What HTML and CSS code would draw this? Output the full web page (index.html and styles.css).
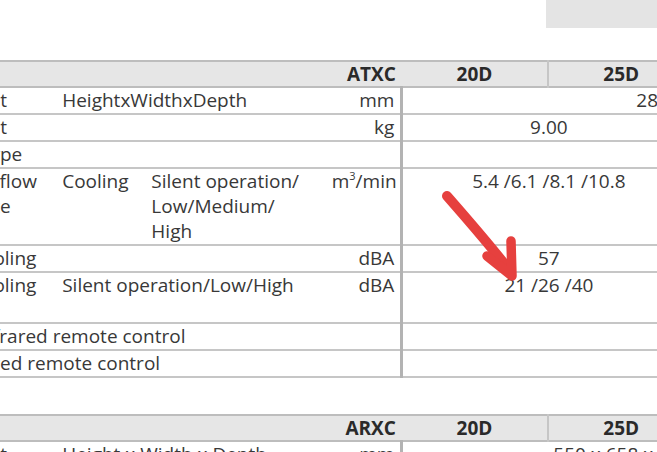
FILE: index.html
```html
<!DOCTYPE html>
<html lang="en">
<head>
<meta charset="utf-8">
<title>Specifications</title>
<link rel="stylesheet" href="styles.css">
</head>
<body>
<div class="page">
  <div class="top"><div class="greybox"></div></div>

  <table class="spec">
    <colgroup>
      <col class="c1"><col class="c2"><col class="c3"><col class="cu">
      <col class="cv"><col class="cv"><col class="cv"><col class="cv">
    </colgroup>
    <thead>
      <tr><th colspan="4" class="model">ATXC</th><th>20D</th><th class="sep">25D</th><th class="sep"></th><th class="sep"></th></tr>
    </thead>
    <tbody>
      <tr><td>Unit</td><td colspan="2">HeightxWidthxDepth</td><td class="unit">mm</td><td colspan="4" class="val">285x770x225</td></tr>
      <tr><td>Unit</td><td colspan="2"></td><td class="unit">kg</td><td colspan="2" class="val">9.00</td><td colspan="2"></td></tr>
      <tr><td class="shift">Type</td><td colspan="2"></td><td class="unit"></td><td colspan="2" class="val"></td><td colspan="2"></td></tr>
      <tr><td>Air flow<br><span class="rate">rate</span></td><td>Cooling</td><td>Silent operation/<br>Low/Medium/<br>High</td><td class="unit">m<sup>3</sup>/min</td><td colspan="2" class="val">5.4 /6.1 /8.1 /10.8</td><td colspan="2"></td></tr>
      <tr><td>Cooling</td><td colspan="2"></td><td class="unit">dBA</td><td colspan="2" class="val">57</td><td colspan="2"></td></tr>
      <tr class="two"><td>Cooling</td><td colspan="2">Silent operation/Low/High</td><td class="unit">dBA</td><td colspan="2" class="val">21 /26 /40</td><td colspan="2"></td></tr>
      <tr><td colspan="3" class="indent">Infrared remote control</td><td class="unit"></td><td colspan="2" class="val"></td><td colspan="2"></td></tr>
      <tr><td colspan="3">Wired remote control</td><td class="unit"></td><td colspan="2" class="val"></td><td colspan="2"></td></tr>
    </tbody>
  </table>

  <table class="spec second">
    <colgroup>
      <col class="c1"><col class="c2"><col class="c3"><col class="cu">
      <col class="cv"><col class="cv"><col class="cv"><col class="cv">
    </colgroup>
    <thead>
      <tr><th colspan="4" class="model">ARXC</th><th>20D</th><th class="sep">25D</th><th class="sep"></th><th class="sep"></th></tr>
    </thead>
    <tbody>
      <tr><td>Unit</td><td colspan="2">Height x Width x Depth</td><td class="unit">mm</td><td colspan="3" class="val">550 x 658 x 285</td><td></td></tr>
    </tbody>
  </table>

  <svg class="arrow" width="657" height="452" viewBox="0 0 657 452" aria-hidden="true">
    <path d="M447 196 C 468 220, 490 245, 510 271" fill="none" stroke="#e6403e" stroke-width="10" stroke-linecap="round"/>
    <path d="M487 256 L 512 276 L 511 241" fill="none" stroke="#e6403e" stroke-width="9.5" stroke-linecap="round" stroke-linejoin="round"/>
  </svg>
</div>
</body>
</html>
```

FILE: styles.css
```css
html, body {
  margin: 0;
  padding: 0;
  background: #ffffff;
}

.page {
  position: relative;
  width: 657px;
  height: 452px;
  overflow: hidden;
  font-family: "Open Sans", "Noto Sans", sans-serif;
  color: #383838;
}

.top {
  height: 60px;
  display: flex;
  justify-content: flex-end;
  align-items: flex-start;
}

.greybox {
  width: 111px;
  height: 28px;
  background: #e4e4e4;
}

.spec {
  border-collapse: collapse;
  table-layout: fixed;
  width: 1017px;
  margin-left: -30px;
  font-size: 19px;
  line-height: 25px;
}

.spec .c1 { width: 92px; }
.spec .c2 { width: 89px; }
.spec .c3 { width: 180px; }
.spec .cu { width: 70px; }
.spec .cv { width: 146px; }

.spec td,
.spec th {
  padding: 0;
  vertical-align: top;
  white-space: nowrap;
  overflow: hidden;
}

.spec tbody tr {
  border-bottom: 2px solid #c6c6c6;
}

.spec thead tr {
  background: #e6e6e6;
  border-top: 2px solid #bdbdbd;
  border-bottom: 2px solid #bdbdbd;
}

.spec th {
  font-weight: 700;
  color: #2a2a2a;
  text-align: center;
  height: 24px;
  line-height: 24px;
}

.spec th.model {
  text-align: right;
  padding-right: 6px;
}

.spec th.sep {
  border-left: 2px solid #c6c6c6;
}

.spec td {
  height: 25px;
}

.spec tr.two td {
  height: 49px;
}

.unit {
  text-align: right;
  padding-right: 6px !important;
}

.unit sup {
  font-size: 11px;
  line-height: 0;
  vertical-align: 8px;
}

.val {
  text-align: center;
  border-left: 3px solid #b3b3b3;
}

.shift {
  padding-left: 10px !important;
}

.indent {
  padding-left: 6px !important;
}

.rate {
  margin-left: 5px;
}

.second {
  margin-top: 36px;
}

.arrow {
  position: absolute;
  left: 0;
  top: 0;
  pointer-events: none;
}
```
